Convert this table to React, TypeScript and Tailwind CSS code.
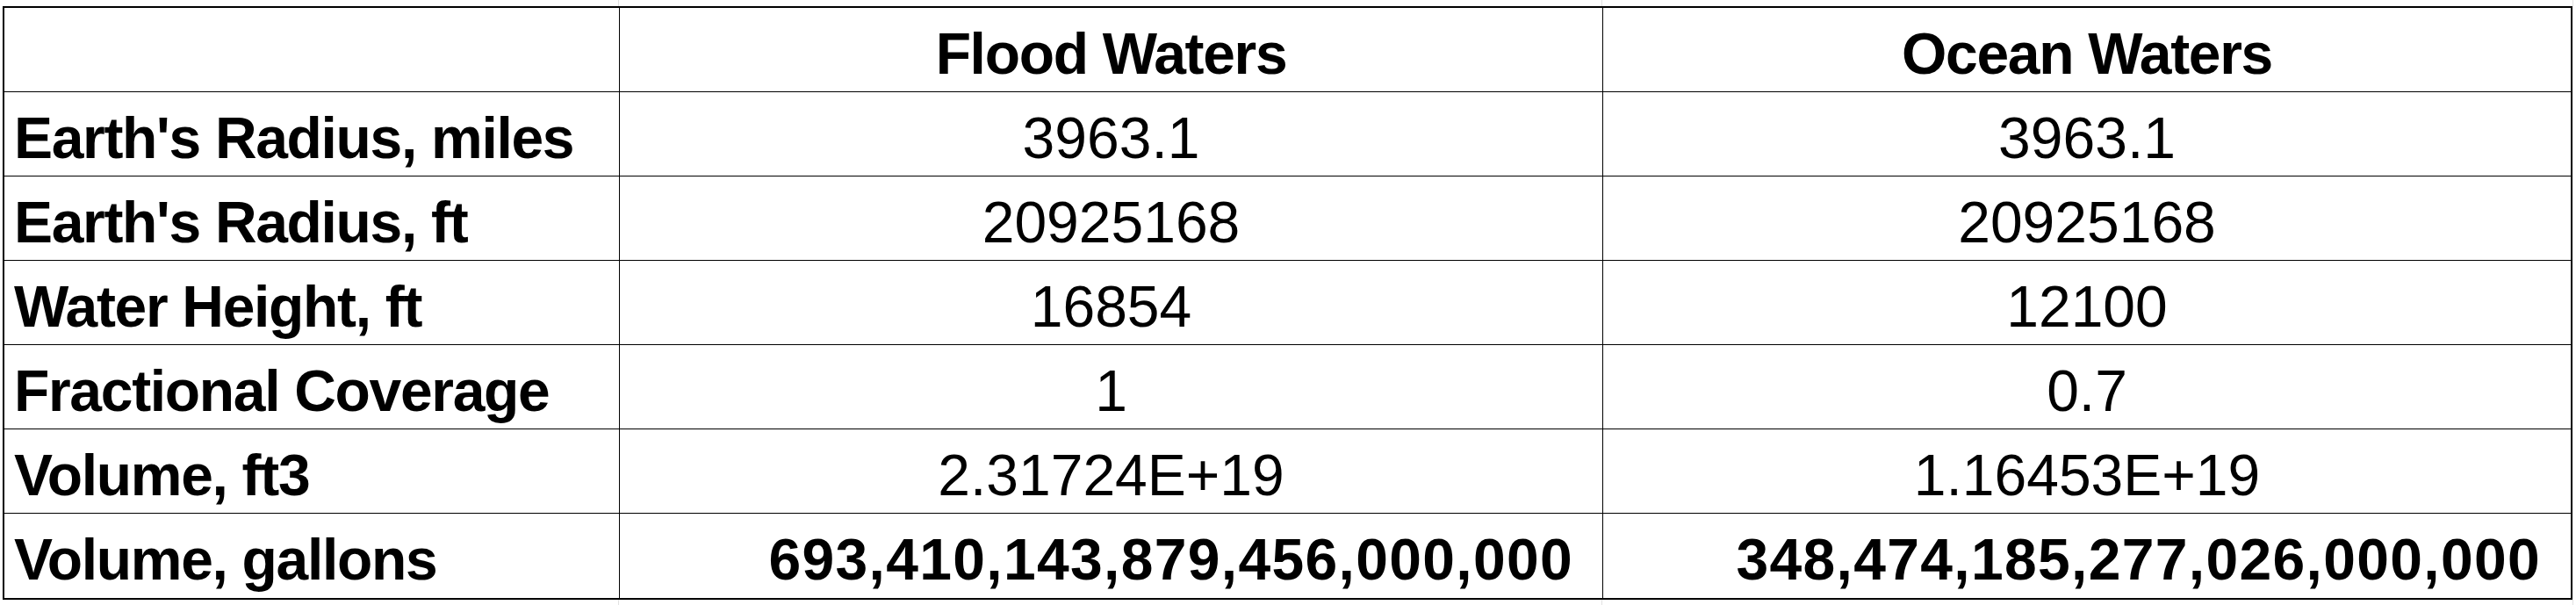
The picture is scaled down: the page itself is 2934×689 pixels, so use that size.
const rows: { label: string; flood: string; ocean: string; big?: boolean }[] = [
  { label: "Earth's Radius, miles", flood: "3963.1", ocean: "3963.1" },
  { label: "Earth's Radius, ft", flood: "20925168", ocean: "20925168" },
  { label: "Water Height, ft", flood: "16854", ocean: "12100" },
  { label: "Fractional Coverage", flood: "1", ocean: "0.7" },
  { label: "Volume, ft3", flood: "2.31724E+19", ocean: "1.16453E+19" },
  {
    label: "Volume, gallons",
    flood: "693,410,143,879,456,000,000",
    ocean: "348,474,185,277,026,000,000",
    big: true,
  },
];

function GridStrip({ h }: { h: string }) {
  // faint excel gridlines outside the bordered table
  return (
    <div className={`grid grid-cols-[705px_1120px_1106px_3px] ${h}`}>
      <div className="border-r border-[#e1e1e1]" />
      <div className="border-r border-[#e1e1e1]" />
      <div className="border-r border-[#e1e1e1]" />
      <div />
    </div>
  );
}

export default function App() {
  const cell = "bg-white flex items-center pt-[8px] leading-none text-[66px] text-black";
  return (
    <div className="w-[2934px] h-[689px] bg-white font-['Liberation_Sans',Arial,sans-serif] overflow-hidden">
      <GridStrip h="h-[7px]" />
      <div className="ml-[3px] w-[2927px] border-2 border-black bg-black">
        <div className="grid grid-cols-[700px_1119px_1102px] grid-rows-[95px_95px_95px_95px_95px_95px_96px] gap-px">
          <div className={cell} />
          <div className={`${cell} justify-center font-bold tracking-[-0.02em]`}>Flood Waters</div>
          <div className={`${cell} justify-center font-bold tracking-[-0.02em]`}>Ocean Waters</div>
          {rows.map((r) => (
            <div key={r.label} className="contents">
              <div className={`${cell} pl-[11px] font-bold tracking-[-0.02em] whitespace-nowrap`}>
                {r.label}
              </div>
              {r.big ? (
                <>
                  <div className={`${cell} justify-end pr-[33px] font-bold tracking-[0.02em]`}>{r.flood}</div>
                  <div className={`${cell} justify-end pr-[34px] font-bold tracking-[0.02em]`}>{r.ocean}</div>
                </>
              ) : (
                <>
                  <div className={`${cell} justify-center`}>{r.flood}</div>
                  <div className={`${cell} justify-center`}>{r.ocean}</div>
                </>
              )}
            </div>
          ))}
        </div>
      </div>
      <GridStrip h="h-[6px]" />
    </div>
  );
}
